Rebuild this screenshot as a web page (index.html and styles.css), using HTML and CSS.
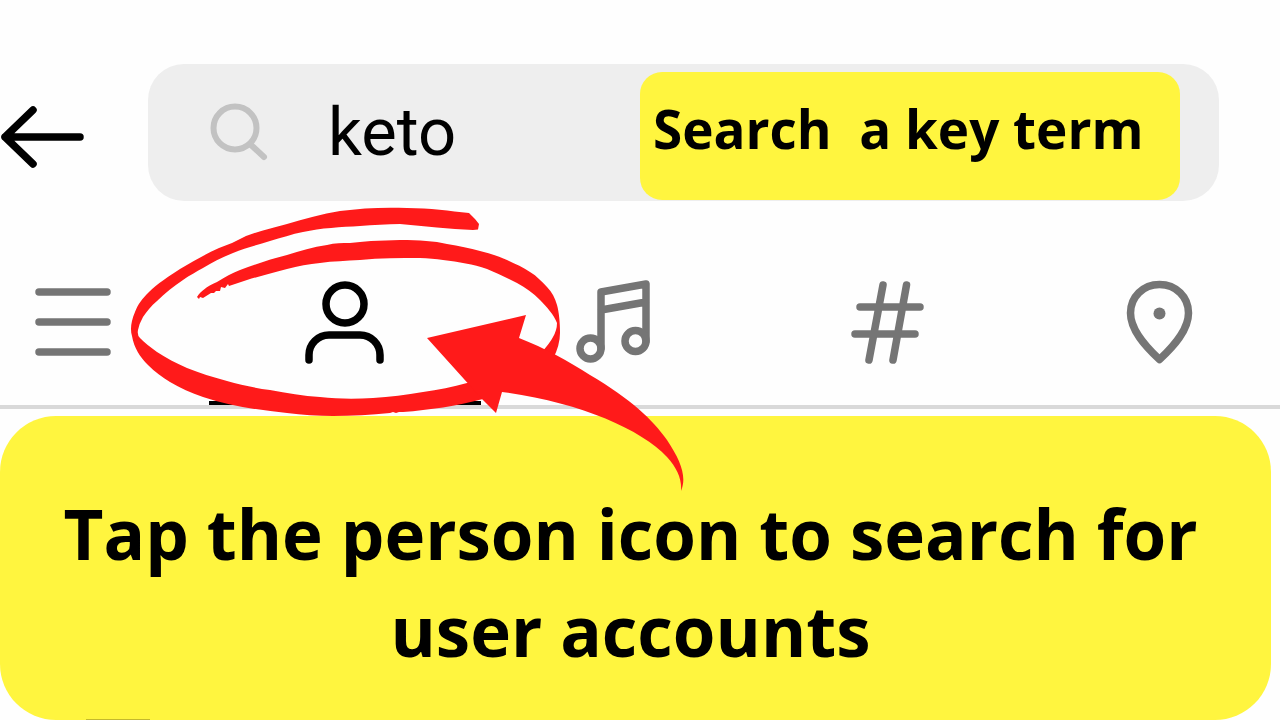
FILE: index.html
```html
<!DOCTYPE html>
<html lang="en">
<head>
<meta charset="UTF-8">
<meta name="viewport" content="width=device-width, initial-scale=1.0">
<title>Search user accounts</title>
<link rel="stylesheet" href="styles.css">
</head>
<body>

<header class="top">
  <button class="back" type="button" aria-label="Back">
    <svg width="84" height="64" viewBox="0 0 84 64"><path d="M80 32H5M33 5L5 32l28 27"/></svg>
  </button>
  <form class="search">
    <svg class="lupa" width="60" height="60" viewBox="0 0 60 60"><circle cx="27" cy="26" r="21.5"/><path d="M42 42l14 13"/></svg>
    <input class="term" type="text" value="keto" aria-label="Search">
    <div class="note">Search  a key term</div>
  </form>
</header>

<nav class="tabs">
  <div class="row">
    <button class="tab" type="button" aria-label="All results">
      <svg width="84" height="84" viewBox="0 0 84 84"><path d="M8 12h68M8 42h68M8 72h68"/></svg>
    </button>
    <button class="tab active" type="button" aria-label="Accounts">
      <svg width="84" height="84" viewBox="0 0 84 84"><circle cx="42" cy="24" r="19"/><path d="M6 80v-5a20 20 0 0 1 20-20h31a20 20 0 0 1 20 20v5"/></svg>
    </button>
    <button class="tab" type="button" aria-label="Sounds">
      <svg width="84" height="84" viewBox="0 0 84 84"><path d="M26 68V12l45-8v57M26 30l45-8"/><circle cx="15.500" cy="68.500" r="10.500"/><circle cx="60.500" cy="61" r="10.500"/></svg>
    </button>
    <button class="tab" type="button" aria-label="Hashtags">
      <svg width="84" height="84" viewBox="0 0 84 84"><path d="M13 27h60M8 54h60M36 5L22 80M59.500 5L46 80"/></svg>
    </button>
    <button class="tab" type="button" aria-label="Places">
      <svg width="84" height="84" viewBox="0 0 84 84"><path d="M40.500 4.500C24 4.500 11.500 17 11.500 33C11.500 50 26 66 40.500 79.500C55 66 69.500 50 69.500 33C69.500 17 57 4.500 40.500 4.500z"/><circle class="dot" cx="40.500" cy="33.500" r="6"/></svg>
    </button>
  </div>

  <!-- hand drawn circle and arrow -->
  <svg class="marks" width="570" height="300" viewBox="125 200 570 300" aria-hidden="true">
    <path d="M469 213C450 211 430 208 407 208C385 207 362 208 340 211C322 214 304 219 287 224C273 228 259 231 246 236L232 243L219 248C206 254 193 261 180 269C169 276 157 284 149 292C142 299 138 304 135 312C131 321 130 330 132 336C134 348 140 357 148 365C155 372 162 377 170 382C180 388 191 393 203 397C230 406 258 410 287 413C302 415 318 416 333 416C352 416 371 415 390 413L393 412L396 413L399 412L403 412C430 410 456 406 483 399L500 380L467 383C453 387 438 390 423 392C406 395 390 397 373 398C355 399 338 399 320 397C303 396 287 393 270 390C255 388 241 385 227 381C213 377 199 373 187 368C176 363 166 358 157 352C150 347 144 342 140 338Q137 335 138 330Q139 324 143 317C147 311 151 306 157 301C165 293 174 286 183 280C190 275 196 272 203 268C213 262 223 257 233 253C245 248 257 245 270 241C281 238 292 234 303 232C321 228 341 227 360 226C373 225 387 224 400 224C425 226 449 229 473 230L478 229.500L479 224L475 219Z"/>
    <path d="M197 297C201 291 206 287 217 282C225 277 232 273 240 270C256 264 271 259 287 255C300 251 313 247 327 245C335 243 342 243 350 243L360 242L371 241L400 240C420 240 434 241 447 244C459 246 470 248 480 251C489 253 498 256 507 260C515 264 523 267 530 272C537 276 542 282 547 287C552 292 555 298 557 305C559 312 560 323 560 333Q560 345 553 359L541 353Q550 343 553 337Q557 330 557 323C554 315 547 307 540 300C533 293 526 288 517 283C507 278 497 273 487 269C473 264 459 262 443 260C436 259 428 258 420 258C400 258 380 258 360 260C346 261 333 261 320 263C309 264 298 266 287 269C273 273 260 276 247 280L235 284L229 286L228 284L225 288L221 287L220 291L216 291L214 293L211 293L203 298L200 297L199 299Z"/>
    <path d="M427 338L526 315L519 338C545 348 568 361 590 375C632 400 652 419 667 440C681 461 687 477 681 491C682 479 677 468 667 457C641 429 578 402 502 392L496 413L482 399Z"/>
  </svg>
</nav>

<main class="banner">
  <h1>Tap the person icon to search for user accounts</h1>
</main>

</body>
</html>
```
FILE: styles.css
```css
* {
  box-sizing: border-box;
}
body {
  margin: 0;
  background: #fefefe;
  color: #000;
  font-family: 'Open Sans', 'Noto Sans', sans-serif;
  overflow-x: hidden;
}
button {
  border: none;
  padding: 0;
  background: none;
  cursor: pointer;
}
svg {
  display: block;
  fill: none;
  stroke: currentColor;
  stroke-width: 7.5;
  stroke-linecap: round;
  stroke-linejoin: round;
}
.top {
  display: flex;
  align-items: center;
  gap: 64px;
  padding: 64px 61px 38px 0;
}
.back {
  padding-top: 8px;
  color: #000;
}
.search {
  display: flex;
  flex: 1;
  align-items: center;
  min-width: 0;
  padding: 8px 39px 1px 60px;
  border-radius: 36px;
  background: #eee;
}
.lupa {
  flex: none;
  margin-bottom: 8px;
  color: #c2c2c2;
  stroke-width: 6;
}
.term {
  flex: 1;
  min-width: 0;
  margin: 0 0 8px 60px;
  padding: 0;
  border: none;
  outline: none;
  background: none;
  font: 67px Roboto, sans-serif;
  color: #000;
}
.note {
  width: 540px;
  padding: 21px 13px 35px;
  border-radius: 22px;
  background: #fff53f;
  font-size: 53px;
  font-weight: 700;
  line-height: 72px;
  white-space: pre;
}
.tabs {
  position: relative;
  border-bottom: 4px solid #d9d9d9;
}
/* the row runs past both sides of the screen */
.row {
  display: grid;
  grid-template-columns: repeat(5, 1fr);
  margin: 0 -17px 0 -63px;
}
.tab {
  display: flex;
  justify-content: center;
  padding: 41px 0;
  color: #757575;
}
.tab.active {
  color: #000;
  box-shadow: inset 0 -4px #000;
}
.dot {
  fill: currentColor;
  stroke: none;
}
.marks {
  position: absolute;
  left: 125px;
  top: -39px;
  z-index: 1;
  fill: #ff1a1a;
  stroke: none;
  pointer-events: none;
}
.banner {
  position: relative;
  margin: 7px 9px 0 0;
  padding: 69px 50px 41px 40px;
  border-radius: 56px;
  background: #fff53f;
  text-align: center;
}
.banner h1 {
  margin: 0;
  font-size: 69px;
  line-height: 97px;
}
/* edge of the first result under the banner */
.banner::after {
  content: "";
  position: absolute;
  left: 86px;
  bottom: 0;
  width: 64px;
  height: 1px;
  background: #c4b92c;
}
```
